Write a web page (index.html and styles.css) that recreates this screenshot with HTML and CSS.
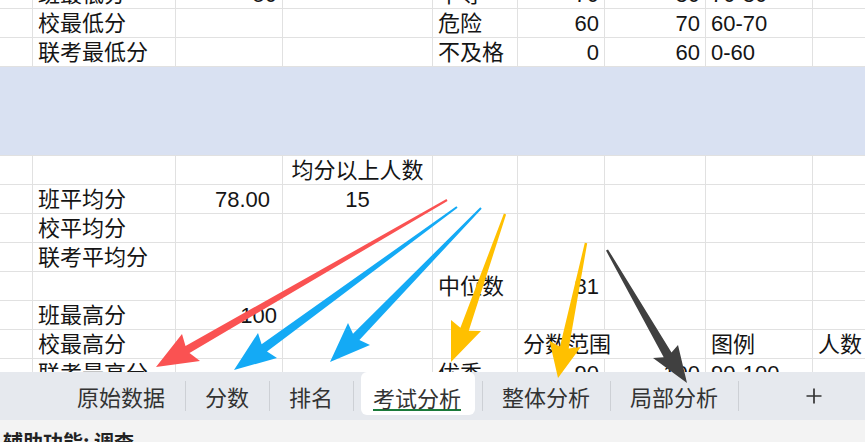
FILE: index.html
```html
<!DOCTYPE html>
<html lang="zh-CN">
<head>
<meta charset="utf-8">
<title>考试分析</title>
<link rel="stylesheet" href="styles.css">
</head>
<body>
<div class="app">
  <div class="sheet">
    <div class="grid">
      <div class="row">
        <div class="c"></div><div class="c">班最低分</div><div class="c r">50</div><div class="c"></div>
        <div class="c">中等</div><div class="c r">70</div><div class="c r">80</div><div class="c">70-80</div><div class="c last"></div>
      </div>
      <div class="row">
        <div class="c"></div><div class="c">校最低分</div><div class="c"></div><div class="c"></div>
        <div class="c">危险</div><div class="c r">60</div><div class="c r">70</div><div class="c">60-70</div><div class="c last"></div>
      </div>
      <div class="row">
        <div class="c"></div><div class="c">联考最低分</div><div class="c"></div><div class="c"></div>
        <div class="c">不及格</div><div class="c r">0</div><div class="c r">60</div><div class="c">0-60</div><div class="c last"></div>
      </div>
      <div class="band"></div>
      <div class="row">
        <div class="c"></div><div class="c"></div><div class="c"></div><div class="c ctr">均分以上人数</div>
        <div class="c"></div><div class="c"></div><div class="c"></div><div class="c"></div><div class="c last"></div>
      </div>
      <div class="row">
        <div class="c"></div><div class="c">班平均分</div><div class="c r acct">78.00</div><div class="c ctr">15</div>
        <div class="c"></div><div class="c"></div><div class="c"></div><div class="c"></div><div class="c last"></div>
      </div>
      <div class="row">
        <div class="c"></div><div class="c">校平均分</div><div class="c"></div><div class="c"></div>
        <div class="c"></div><div class="c"></div><div class="c"></div><div class="c"></div><div class="c last"></div>
      </div>
      <div class="row">
        <div class="c"></div><div class="c">联考平均分</div><div class="c"></div><div class="c"></div>
        <div class="c"></div><div class="c"></div><div class="c"></div><div class="c"></div><div class="c last"></div>
      </div>
      <div class="row">
        <div class="c"></div><div class="c"></div><div class="c"></div><div class="c"></div>
        <div class="c">中位数</div><div class="c r">81</div><div class="c"></div><div class="c"></div><div class="c last"></div>
      </div>
      <div class="row">
        <div class="c"></div><div class="c">班最高分</div><div class="c r">100</div><div class="c"></div>
        <div class="c"></div><div class="c"></div><div class="c"></div><div class="c"></div><div class="c last"></div>
      </div>
      <div class="row">
        <div class="c"></div><div class="c">校最高分</div><div class="c"></div><div class="c"></div>
        <div class="c"></div><div class="c spill">分数范围</div><div class="c"></div><div class="c">图例</div><div class="c last">人数</div>
      </div>
      <div class="row">
        <div class="c"></div><div class="c">联考最高分</div><div class="c"></div><div class="c"></div>
        <div class="c">优秀</div><div class="c r">90</div><div class="c r">100</div><div class="c">90-100</div><div class="c last"></div>
      </div>
    </div>
  </div>

  <div class="tabbar">
    <div class="tab">原始数据</div>
    <div class="sep"></div>
    <div class="tab">分数</div>
    <div class="sep"></div>
    <div class="tab">排名</div>
    <div class="sep"></div>
    <div class="tab active"><span class="label">考试分析</span></div>
    <div class="sep"></div>
    <div class="tab">整体分析</div>
    <div class="sep"></div>
    <div class="tab">局部分析</div>
    <div class="sep"></div>
    <div class="plus">
      <svg width="18" height="18" viewBox="0 0 18 18"><path d="M9 1.5V16.5M1.5 9H16.5" stroke="#333" stroke-width="1.7" fill="none"/></svg>
    </div>
  </div>

  <div class="status">辅助功能: 调查</div>

  <svg class="arrows" width="865" height="442" viewBox="0 0 865 442">
    <polygon fill="#fa5252" points="446.5,199.1 185.5,346 182,334 156,367 200,361 189.5,353 447.5,200.9"/>
    <polygon fill="#14aaf5" points="456.4,206.2 261.6,344.3 258,333 234,370 277,358 267,351.5 457.6,207.8"/>
    <polygon fill="#14aaf5" points="480.3,207.3 353,333.7 348,323 330,362 370,345 359.4,340 481.7,208.7"/>
    <polygon fill="#ffc000" points="503.9,213.6 460.4,327.8 451,320 451,362 481,331 468.8,330.8 506.1,214.4"/>
    <polygon fill="#ffc000" points="584.8,242.8 559.9,346.7 549.4,340.5 558,378 580.8,346.9 568.7,348.5 587.2,243.2"/>
    <polygon fill="#404040" points="606,250.6 663.7,357.2 653,358 687,383 678,345 671.5,352.6 608,249.4"/>
  </svg>
</div>
</body>
</html>
```

FILE: styles.css
```css
* { box-sizing: border-box; }

body {
  margin: 0;
  font-family: "Liberation Sans", "Noto Sans CJK SC", sans-serif;
  background: #fff;
}

.app {
  position: relative;
  width: 865px;
  height: 442px;
  overflow: hidden;
  background: #fff;
}

.sheet {
  height: 372px;
  overflow: hidden;
}

.grid {
  margin-top: -20px;
}

.row {
  display: grid;
  grid-template-columns: 33px 143px 107px 150px 85px 87px 101px 107px 1fr;
  height: 29px;
  border-bottom: 1px solid #e1e1e1;
}

.c {
  display: flex;
  align-items: flex-end;
  padding: 0 5px;
  border-right: 1px solid #e1e1e1;
  font-size: 22px;
  line-height: 26px;
  color: #151515;
  white-space: nowrap;
  min-width: 0;
}

.c.last { border-right: none; }
.c.r { justify-content: flex-end; }
.c.ctr { justify-content: center; }
.c.acct { padding-right: 12px; }
.c.spill { border-right-color: transparent; overflow: visible; }

.band {
  height: 89px;
  background: #d9e1f2;
  border-bottom: 1px solid #e1e1e1;
}

.tabbar {
  display: flex;
  align-items: center;
  height: 48px;
  padding-left: 58px;
  background: #e6e9ee;
  font-family: "Noto Sans CJK SC", sans-serif;
  font-size: 22px;
  color: #333;
}

.tab {
  padding: 0 20px 0 19px;
  line-height: 48px;
  white-space: nowrap;
}

.tab.active {
  align-self: flex-start;
  height: 43px;
  margin: 0 7px;
  padding: 0 14px 0 12px;
  background: #fff;
  border-radius: 6px;
  line-height: 24px;
}

.tab.active .label {
  display: block;
  margin-top: 13px;
  border-bottom: 2px solid #1b7a3a;
}

.sep {
  width: 1px;
  height: 30px;
  background: #cdd0d5;
}

.plus {
  display: flex;
  margin-left: 66px;
}

.status {
  height: 22px;
  padding: 8px 0 0 3px;
  background: #f3f3f3;
  font-family: "Noto Sans CJK SC", sans-serif;
  font-size: 20px;
  font-weight: bold;
  line-height: 28px;
  color: #222;
  white-space: nowrap;
}

.arrows {
  position: absolute;
  left: 0;
  top: 0;
  pointer-events: none;
}
```
